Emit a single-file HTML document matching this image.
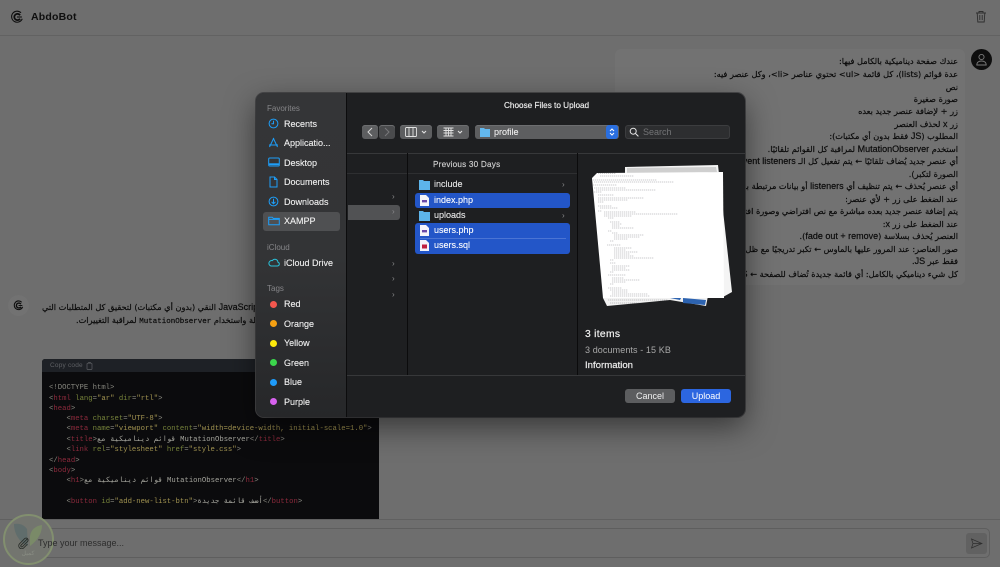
<!DOCTYPE html>
<html lang="en">
<head>
<meta charset="utf-8">
<title>AbdoBot</title>
<style>
html,body{margin:0;padding:0;width:1000px;height:567px;overflow:hidden;background:#6e6e6e}
body{position:relative;font-family:"Liberation Sans","Noto Sans CJK SC",sans-serif;color:#111}
.a{position:absolute}
.ln{position:absolute;right:42px;white-space:nowrap;direction:rtl;font-size:8.2px;line-height:12px;color:#0a0a0a;font-family:"DejaVu Sans",sans-serif;-webkit-text-stroke:.18px #0a0a0a}
.ln b,.lb b{font:400 9px/12px "Liberation Sans",sans-serif}
.lb{position:absolute;white-space:nowrap;direction:rtl;font-size:8.2px;line-height:12px;color:#0a0a0a;font-family:"DejaVu Sans",sans-serif;-webkit-text-stroke:.18px #0a0a0a}
.code{position:absolute;left:49px;font:7.27px/10.4px "Liberation Mono","DejaVu Sans Mono",monospace;white-space:pre;color:#a4a49c;direction:ltr}
.t{color:#8c2a3c}.k{color:#76833a}.s{color:#a09250}.p{color:#86867e}
.side{position:absolute;left:268px;font-size:9px;line-height:12px;color:#f0f0f0;white-space:nowrap;-webkit-text-stroke:.12px #f0f0f0}
.head{position:absolute;left:267px;font-size:8px;line-height:10px;color:#858588;white-space:nowrap}
.dot{position:absolute;left:270px;width:7px;height:7px;border-radius:50%}
.f{position:absolute;left:434px;font-size:9px;line-height:12px;color:#e8e8e8;white-space:nowrap;-webkit-text-stroke:.12px currentColor}
.btn{position:absolute;background:#5d5e60;border-radius:3px;box-shadow:inset 0 1px 0 #6d6e70}
.chev{position:absolute;color:#8a8a8c;font-size:8px;line-height:10px}
</style>
</head>
<body>

<!-- Header -->
<div class="a" style="left:0;top:35px;width:1000px;height:1px;background:#626262"></div>
<svg class="a" style="left:10px;top:10px" width="14" height="14" viewBox="0 0 16 16" fill="none" stroke="#0d0d0d"><path d="M12.6 3.200A6.300 6.300 0 1 0 14 10" stroke-width="1.200"/><path d="M11.500 6A3.600 3.600 0 1 0 11.500 10" stroke-width="2"/><path d="M8 8h5.600" stroke-width="1.200"/></svg>
<div class="a" style="left:31px;top:10px;font-size:10.5px;line-height:14px;font-weight:700;color:#0e0e0e;letter-spacing:.2px">AbdoBot</div>
<svg class="a" style="left:975px;top:10px" width="12" height="13" viewBox="0 0 12 13" fill="none" stroke="#2e2e2e" stroke-width=".9"><path d="M1 3h10M4 3V1.500h4V3M2.200 3l.6 9h6.400l.6-9M4.800 5v5M7.200 5v5"/></svg>

<!-- User message -->
<div class="a" style="left:615px;top:49px;width:350px;height:236px;background:#727272;border-radius:6px"></div>
<div class="a" style="left:971px;top:49px;width:21px;height:21px;background:#0e0e0e;border-radius:50%"></div>
<svg class="a" style="left:975px;top:53px" width="13" height="13" viewBox="0 0 13 13" fill="none" stroke="#7a7a7a" stroke-width=".9"><circle cx="6.500" cy="4" r="2.600"/><path d="M1.800 12c0-2.600 2-4 4.700-4s4.700 1.400 4.700 4z"/></svg>
<div class="ln" style="top:55px">عندك صفحة ديناميكية بالكامل فيها:</div>
<div class="ln" style="top:68px">عدة قوائم (lists)، كل قائمة &lt;ul&gt; تحتوي عناصر &lt;li&gt;، وكل عنصر فيه:</div>
<div class="ln" style="top:81px">نص</div>
<div class="ln" style="top:93px">صورة صغيرة</div>
<div class="ln" style="top:105px">زر + لإضافة عنصر جديد بعده</div>
<div class="ln" style="top:118px">زر <b>x</b> لحذف العنصر</div>
<div class="ln" style="top:130px">المطلوب (<b>JS</b> فقط بدون أي مكتبات):</div>
<div class="ln" style="top:143px">استخدم <b>MutationObserver</b> لمراقبة كل القوائم تلقائيًا.</div>
<div class="ln" style="top:155px">أي عنصر جديد يُضاف تلقائيًا ← يتم تفعيل كل الـ <b>event listeners</b> عليه (الأزرار</div>
<div class="ln" style="top:168px">الصورة لتكبر).</div>
<div class="ln" style="top:180px">أي عنصر يُحذف ← يتم تنظيف أي <b>listeners</b> أو بيانات مرتبطة به تلقائيًا كاملة</div>
<div class="ln" style="top:193px">عند الضغط على زر + لأي عنصر:</div>
<div class="ln" style="top:205px">يتم إضافة عنصر جديد بعده مباشرة مع نص افتراضي وصورة افتراضية عشوائية</div>
<div class="ln" style="top:218px">عند الضغط على زر <b>x</b>:</div>
<div class="ln" style="top:230px">العنصر يُحذف بسلاسة (<b>fade out + remove</b>).</div>
<div class="ln" style="top:243px">صور العناصر: عند المرور عليها بالماوس ← تكبر تدريجيًا مع ظل (<b>box-shadow effect</b>)</div>
<div class="ln" style="top:255px">فقط عبر <b>JS</b>.</div>
<div class="ln" style="top:268px">كل شيء ديناميكي بالكامل: أي قائمة جديدة تُضاف للصفحة ← <b>JS</b> يتعامل معها تلقائيًا</div>

<!-- Bot message -->
<div class="a" style="left:8px;top:295px;width:21px;height:21px;background:#727272;border-radius:50%"></div>
<svg class="a" style="left:13px;top:300px" width="11" height="11" viewBox="0 0 16 16" fill="none" stroke="#0d0d0d"><path d="M12.600 3.200A6.300 6.300 0 1 0 14 10" stroke-width="1.500"/><path d="M11.500 6A3.600 3.600 0 1 0 11.500 10" stroke-width="2"/><path d="M8 8h5.600" stroke-width="1.400"/></svg>
<div class="lb" style="left:42px;top:301px">سأقوم باستخدام <b>JavaScript</b> النقي (بدون أي مكتبات) لتحقيق كل المتطلبات التي</div>
<div class="lb" style="left:76px;top:314px">الهيكلة واستخدام <span style="font:7.5px 'Liberation Mono',monospace">MutationObserver</span> لمراقبة التغييرات.</div>

<!-- Code block -->
<div class="a" style="left:42px;top:359px;width:337px;height:160px;background:#0b0b0d;border-radius:3px 3px 0 0"></div>
<div class="a" style="left:42px;top:359px;width:337px;height:13px;background:#1e2126;border-radius:3px 3px 0 0"></div>
<div class="a" style="left:50px;top:360px;font-size:6.5px;line-height:11px;color:#5e6064;letter-spacing:.2px">Copy code</div>
<svg class="a" style="left:86px;top:362px" width="7" height="8" viewBox="0 0 7 8" fill="none" stroke="#5e6064" stroke-width=".7"><rect x="1" y="1.200" width="5" height="6.300" rx=".8"/><path d="M2.600 1.200V.5h1.800v.7"/></svg>
<div class="code" style="top:383px"><span class="p">&lt;!DOCTYPE html&gt;</span></div>
<div class="code" style="top:393.6px"><span class="p">&lt;</span><span class="t">html</span> <span class="k">lang</span><span class="p">=</span><span class="s">"ar"</span> <span class="k">dir</span><span class="p">=</span><span class="s">"rtl"</span><span class="p">&gt;</span></div>
<div class="code" style="top:404px"><span class="p">&lt;</span><span class="t">head</span><span class="p">&gt;</span></div>
<div class="code" style="top:414px">    <span class="p">&lt;</span><span class="t">meta</span> <span class="k">charset</span><span class="p">=</span><span class="s">"UTF-8"</span><span class="p">&gt;</span></div>
<div class="code" style="top:424.4px">    <span class="p">&lt;</span><span class="t">meta</span> <span class="k">name</span><span class="p">=</span><span class="s">"viewport"</span> <span class="k">content</span><span class="p">=</span><span class="s">"width=device-width, initial-scale=1.0"</span><span class="p">&gt;</span></div>
<div class="code" style="top:434.8px">    <span class="p">&lt;</span><span class="t">title</span><span class="p">&gt;</span>قوائم ديناميكية مع MutationObserver<span class="p">&lt;/</span><span class="t">title</span><span class="p">&gt;</span></div>
<div class="code" style="top:445.2px">    <span class="p">&lt;</span><span class="t">link</span> <span class="k">rel</span><span class="p">=</span><span class="s">"stylesheet"</span> <span class="k">href</span><span class="p">=</span><span class="s">"style.css"</span><span class="p">&gt;</span></div>
<div class="code" style="top:455.6px"><span class="p">&lt;/</span><span class="t">head</span><span class="p">&gt;</span></div>
<div class="code" style="top:466px"><span class="p">&lt;</span><span class="t">body</span><span class="p">&gt;</span></div>
<div class="code" style="top:476.4px">    <span class="p">&lt;</span><span class="t">h1</span><span class="p">&gt;</span>قوائم ديناميكية مع MutationObserver<span class="p">&lt;/</span><span class="t">h1</span><span class="p">&gt;</span></div>
<div class="code" style="top:497.2px">    <span class="p">&lt;</span><span class="t">button</span> <span class="k">id</span><span class="p">=</span><span class="s">"add-new-list-btn"</span><span class="p">&gt;</span>أضف قائمة جديدة<span class="p">&lt;/</span><span class="t">button</span><span class="p">&gt;</span></div>

<!-- Input bar -->
<div class="a" style="left:0;top:519px;width:1000px;height:1px;background:#606060"></div>
<div class="a" style="left:8px;top:528px;width:982px;height:30px;box-sizing:border-box;border:1px solid #5e5e5e;border-radius:5px"></div>
<div class="a" style="left:966px;top:533px;width:21px;height:21px;background:#616161;border-radius:3px"></div>
<svg class="a" style="left:970px;top:538px" width="13" height="11" viewBox="0 0 13 11" fill="none" stroke="#2e2e2e" stroke-width=".7"><path d="M1.500 1 12 5.500 1.500 10 3 5.500zM3 5.500h9"/></svg>

<!-- Watermark -->
<div class="a" style="left:3px;top:514px;width:51px;height:51px;border-radius:50%;box-sizing:border-box;border:2.500px solid #828f6f;background:#73756f"></div>
<svg class="a" style="left:11px;top:522px" width="34" height="30" viewBox="0 0 34 30"><path d="M3 2c6-1 10 1 13 5l1 17C9 21 3 12 3 2z" fill="#606d6c"/><path d="M19 24C27 18 31 11 31 3c-7 1-11 5-12 11z" fill="#7a8a68"/></svg>
<div class="a" style="left:13px;top:551px;font-size:6px;line-height:7px;color:#8a8e84;direction:rtl;width:30px;text-align:center">كميل</div>
<svg class="a" style="left:17px;top:537px" width="12" height="12" viewBox="0 0 13 13" fill="none" stroke="#2a2e2a" stroke-width="1"><path d="M11 2.200 4.400 8.800a1.100 1.100 0 0 0 1.600 1.600l5.400-5.500A2.200 2.200 0 0 0 8.200 1.800L2.600 7.500a3.200 3.200 0 0 0 4.500 4.500l4.200-4.200"/></svg>
<div class="a" style="left:38px;top:537px;font-size:9px;line-height:12px;color:#2d2d2d">Type your message...</div>

<!-- Dialog -->
<div class="a" style="left:256px;top:93px;width:489px;height:324px;border-radius:8px;background:#1e1f21;box-shadow:0 10px 30px rgba(0,0,0,.5),0 0 0 1px #4a4a4c;overflow:hidden">
  <div class="a" style="left:0;top:0;width:91px;height:324px;background:linear-gradient(180deg,#343537,#333436 50%,#262729);border-right:1px solid #0c0c0d;box-sizing:border-box"></div>
  <div class="a" style="left:91px;top:60px;width:398px;height:1px;background:#37383a"></div>
  <div class="a" style="left:91px;top:282px;width:398px;height:1px;background:#37383a"></div>
  <div class="a" style="left:91px;top:80px;width:231px;height:1px;background:#2e2f31"></div>
  <div class="a" style="left:151px;top:60px;width:1px;height:222px;background:#0b0b0c"></div>
  <div class="a" style="left:321px;top:60px;width:1px;height:222px;background:#0b0b0c"></div>
</div>

<!-- Sidebar -->
<div class="head" style="top:104px">Favorites</div>
<svg class="a" style="left:268px;top:118px" width="11" height="11" viewBox="0 0 11 11" fill="none" stroke="#1e9ef8"><circle cx="5.500" cy="5.500" r="4.400"/><path d="M5.500 2.800v3H3.400"/></svg>
<div class="side" style="left:284px;top:118px">Recents</div>
<svg class="a" style="left:268px;top:137px" width="11" height="12" viewBox="0 0 11 12" fill="none" stroke="#1e9ef8"><path d="M5.800 1 1.500 10M5.200 1l4.300 9M1 8h9"/></svg>
<div class="side" style="left:284px;top:137px">Applicatio...</div>
<svg class="a" style="left:268px;top:157px" width="12" height="11" viewBox="0 0 12 11" fill="none" stroke="#1e9ef8"><rect x=".7" y="1" width="10.600" height="8" rx="1"/><path d="M1 7.200h10" stroke-width="1.800"/></svg>
<div class="side" style="left:284px;top:157px">Desktop</div>
<svg class="a" style="left:269px;top:176px" width="9" height="12" viewBox="0 0 9 12" fill="none" stroke="#1e9ef8"><path d="M1 1h4.500L8 3.500V11H1zM5.500 1v2.500H8"/></svg>
<div class="side" style="left:284px;top:176px">Documents</div>
<svg class="a" style="left:268px;top:196px" width="11" height="11" viewBox="0 0 11 11" fill="none" stroke="#1e9ef8"><circle cx="5.500" cy="5.500" r="4.400"/><path d="M5.500 2.800v5M3.600 5.900l1.900 1.900 1.900-1.900"/></svg>
<div class="side" style="left:284px;top:196px">Downloads</div>
<div class="a" style="left:263px;top:212px;width:77px;height:19px;background:#4f5052;border-radius:3px"></div>
<svg class="a" style="left:268px;top:216px" width="12" height="10" viewBox="0 0 12 10" fill="none" stroke="#1e9ef8"><path d="M.7 8.800V1.200h3.600l1 1.200h6v6.400zM.7 3.400h10.600"/></svg>
<div class="side" style="left:284px;top:215px">XAMPP</div>
<div class="head" style="top:243px">iCloud</div>
<svg class="a" style="left:268px;top:258px" width="12" height="9" viewBox="0 0 12 9" fill="none" stroke="#2ac0d8"><path d="M3 8h6.500a2 2 0 0 0 .4-3.900A3 3 0 0 0 4.400 2.600 2.700 2.700 0 0 0 3 8z"/></svg>
<div class="side" style="left:284px;top:257px">iCloud Drive</div>
<div class="head" style="top:284px">Tags</div>
<div class="dot" style="top:301px;background:#f4574e"></div><div class="side" style="left:284px;top:298px">Red</div>
<div class="dot" style="top:320px;background:#f5a012"></div><div class="side" style="left:284px;top:318px">Orange</div>
<div class="dot" style="top:340px;background:#fce80c"></div><div class="side" style="left:284px;top:337px">Yellow</div>
<div class="dot" style="top:359px;background:#3bd64c"></div><div class="side" style="left:284px;top:357px">Green</div>
<div class="dot" style="top:379px;background:#1e9bfa"></div><div class="side" style="left:284px;top:376px">Blue</div>
<div class="dot" style="top:398px;background:#d761ee"></div><div class="side" style="left:284px;top:396px">Purple</div>

<!-- Title -->
<div class="a" style="left:504px;top:100px;font-size:8.2px;line-height:11px;font-weight:400;color:#f0f0f0;-webkit-text-stroke:.15px #f0f0f0">Choose Files to Upload</div>

<!-- Toolbar -->
<div class="btn" style="left:362px;top:125px;width:16px;height:14px"></div>
<svg class="a" style="left:366px;top:127px" width="8" height="10" viewBox="0 0 8 10" fill="none" stroke="#d5d5d5"><path d="M6 1 2 5l4 4"/></svg>
<div class="btn" style="left:379px;top:125px;width:16px;height:14px;background:#4a4b4d"></div>
<svg class="a" style="left:383px;top:127px" width="8" height="10" viewBox="0 0 8 10" fill="none" stroke="#79797b"><path d="M2 1l4 4-4 4"/></svg>
<div class="btn" style="left:400px;top:125px;width:32px;height:14px"></div>
<svg class="a" style="left:405px;top:127px" width="24" height="10" viewBox="0 0 24 10" fill="none" stroke="#e2e2e2" stroke-width=".9"><rect x=".5" y=".5" width="11" height="9" rx="1"/><path d="M4 .5v9M8 .5v9"/><path d="M17 4l2 2 2-2" stroke-width="1.100"/></svg>
<div class="btn" style="left:437px;top:125px;width:32px;height:14px"></div>
<svg class="a" style="left:443px;top:127px" width="24" height="10" viewBox="0 0 24 10" fill="none" stroke="#e2e2e2" stroke-width=".9"><path d="M.5 1h10M.5 3.500h10M.5 6h10M.5 9h10M3 1v8M5.500 1v8M8 1v8"/><path d="M15 4l2 2 2-2" stroke-width="1.100"/></svg>
<div class="btn" style="left:475px;top:125px;width:144px;height:14px"></div>
<svg class="a" style="left:480px;top:127px" width="10" height="10" viewBox="0 0 10 10"><path d="M0 1h4l1 1h5v8H0z" fill="#63b8ee"/></svg>
<div class="a" style="left:494px;top:126px;font-size:9px;line-height:12px;color:#eee;-webkit-text-stroke:.12px #eee">profile</div>
<div class="a" style="left:606px;top:125px;width:12px;height:14px;background:#2a6fe0;border-radius:3px"></div>
<svg class="a" style="left:608px;top:126px" width="8" height="12" viewBox="0 0 8 12" fill="none" stroke="#fff"><path d="M2 5l2-2 2 2M2 7l2 2 2-2"/></svg>
<div class="a" style="left:625px;top:125px;width:105px;height:14px;box-sizing:border-box;background:#2d2e30;border:1px solid #3c3d3f;border-radius:3px"></div>
<svg class="a" style="left:629px;top:127px" width="10" height="10" viewBox="0 0 10 10" fill="none" stroke="#e8e8e8"><circle cx="4.200" cy="4.200" r="3"/><path d="M6.500 6.500 9.400 9.400"/></svg>
<div class="a" style="left:643px;top:126px;font-size:9px;line-height:12px;color:#737476">Search</div>

<!-- Parent column -->
<div class="a" style="left:348px;top:205px;width:52px;height:15px;background:#515254;border-radius:0 3px 3px 0"></div>
<div class="chev" style="left:392px;top:192px">›</div>
<div class="chev" style="left:392px;top:207px">›</div>
<div class="chev" style="left:392px;top:259px">›</div>
<div class="chev" style="left:392px;top:274px">›</div>
<div class="chev" style="left:392px;top:290px">›</div>

<!-- File column -->
<div class="a" style="left:433px;top:158.5px;font-size:8.2px;line-height:11px;color:#cfcfcf;font-weight:400;letter-spacing:.2px;-webkit-text-stroke:.15px #cfcfcf">Previous 30 Days</div>
<div class="a" style="left:415px;top:193px;width:155px;height:15px;background:#2356c8;border-radius:3px"></div>
<div class="a" style="left:415px;top:223px;width:155px;height:31px;background:#2356c8;border-radius:3px"></div>
<div class="a" style="left:420px;top:238px;width:146px;height:1px;background:#4a74d4"></div>
<svg class="a" style="left:419px;top:179px" width="11" height="11" viewBox="0 0 11 11"><path d="M0 1h4l1 1h6v9H0z" fill="#5db4ea"/></svg>
<div class="f" style="top:178px">include</div>
<div class="chev" style="left:562px;top:180px">›</div>
<svg class="a" style="left:420px;top:195px" width="9" height="11" viewBox="0 0 9 11"><path d="M0 0h6l3 3v8H0z" fill="#f4f4fa"/><rect x="2" y="5" width="5" height="2.400" fill="#6a4aa8"/></svg>
<div class="f" style="top:194px;color:#fff">index.php</div>
<svg class="a" style="left:419px;top:210px" width="11" height="11" viewBox="0 0 11 11"><path d="M0 1h4l1 1h6v9H0z" fill="#5db4ea"/></svg>
<div class="f" style="top:209px">uploads</div>
<div class="chev" style="left:562px;top:211px">›</div>
<svg class="a" style="left:420px;top:225px" width="9" height="11" viewBox="0 0 9 11"><path d="M0 0h6l3 3v8H0z" fill="#f4f4fa"/><rect x="2" y="5" width="5" height="2.400" fill="#6a4aa8"/></svg>
<div class="f" style="top:224px;color:#fff">users.php</div>
<svg class="a" style="left:420px;top:240px" width="9" height="11" viewBox="0 0 9 11"><path d="M0 0h6l3 3v8H0z" fill="#f4f4fa"/><rect x="2" y="4.500" width="5" height="4" fill="#c02040"/></svg>
<div class="f" style="top:239px;color:#fff">users.sql</div>

<!-- Preview -->
<svg class="a" style="left:580px;top:160px" width="160" height="150" viewBox="0 0 160 150">
  <path d="M45 7 138 5 152 132 143 137 143 12 45 14z" fill="#f4f4f4"/>
  <path d="M47 8 136 7 137 12 47 14z" fill="#cfcfcf"/>
  <path d="M23 138 27 146 90 140 126 146 128 136z" fill="#f2f2f2"/>
  <path d="M103 138 126 140 125 145 103 143zM90 138 101 138 100 140z" fill="#2d63b0"/>
  <path d="M12 18 17 13 143 12 144 138 23 138z" fill="#fff"/>
  <g stroke="#6a6a70" stroke-width=".35" fill="none" stroke-dasharray="1.300 .7">
    <path d="M18 13.500h18M20 16h34M13 20h64M14 22h80M13 25h24M14 28h32M16 30h60M14 32h8"/>
    <path d="M18 35h16M18 38h46M18 40h30M18 42h6M18 46h14M20 48h18M18 51h4"/>
    <path d="M24 52h32M24 54h74M24 56h28M28 58h6M30 62h10M32 64h10M32 66h8M32 68h22M28 71h4"/>
    <path d="M32 73h6M34 75h30M34 77h26M34 79h14M30 81h4"/>
    <path d="M27 85h14M34 88h18M34 90h12M34 92h24M34 94h16M34 96h20M34 98h40M30 100h4"/>
    <path d="M30 103h6M32 106h18M32 108h14M32 110h18M30 112h4"/>
    <path d="M28 115h18M32 118h12M32 120h28M32 122h14M30 124h4"/>
    <path d="M28 128h14M30 130h18M32 132h16M32 134h36M30 136h40M28 140h60M30 143h30"/>
  </g>
</svg>
<div class="a" style="left:585px;top:328px;font-size:10.3px;line-height:13px;color:#f0f0f0;-webkit-text-stroke:.2px #f0f0f0;letter-spacing:.3px">3 items</div>
<div class="a" style="left:585px;top:344px;font-size:9px;line-height:12px;color:#a8a8a8;letter-spacing:.1px">3 documents - 15 KB</div>
<div class="a" style="left:585px;top:360px;font-size:9.6px;line-height:12px;color:#ececec;-webkit-text-stroke:.2px #ececec">Information</div>

<!-- Buttons -->
<div class="a" style="left:625px;top:389px;width:50px;height:14px;background:#5c5d5f;border-radius:3px;font-size:9px;line-height:14px;text-align:center;color:#efefef">Cancel</div>
<div class="a" style="left:681px;top:389px;width:50px;height:14px;background:#2c66e0;border-radius:3px;font-size:9px;line-height:14px;text-align:center;color:#fff">Upload</div>

</body>
</html>
